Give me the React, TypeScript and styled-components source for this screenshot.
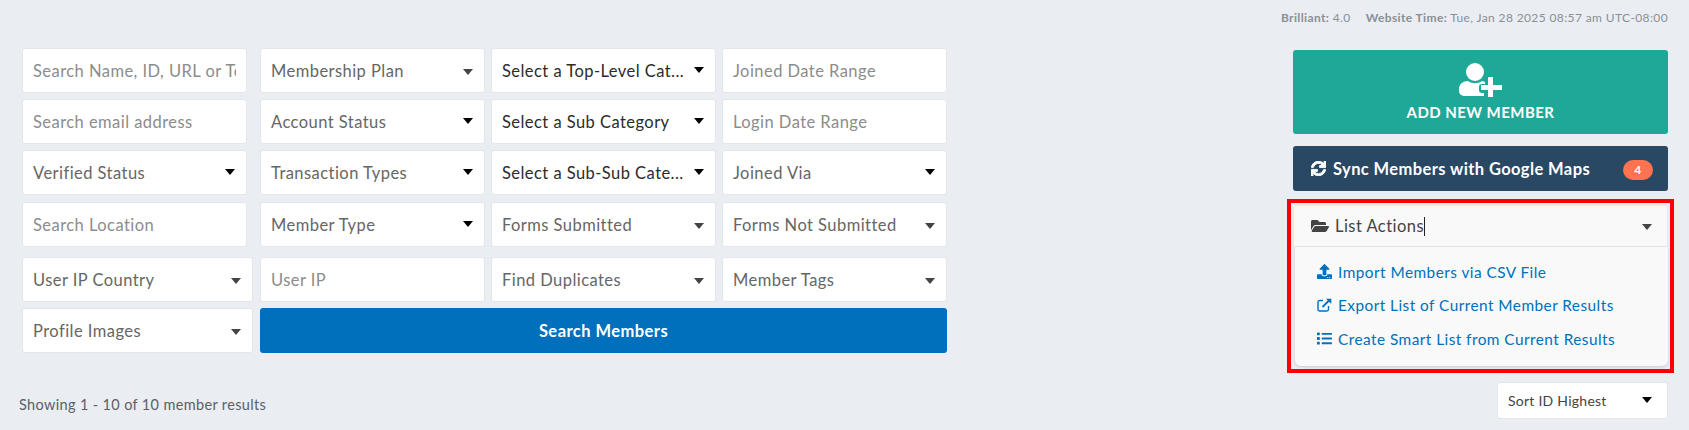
import React from 'react';
import styled, { createGlobalStyle } from 'styled-components';
import { FaSync, FaFolderOpen, FaUpload, FaList } from 'react-icons/fa';

const GlobalStyle = createGlobalStyle`
  html, body {
    margin: 0;
    padding: 0;
    background: #eaedf2;
    font-family: 'Lato', 'Open Sans', sans-serif;
    letter-spacing: 0.45px;
  }
  * { box-sizing: border-box; }
`;

const Caret = ({ solid }: { solid?: boolean }) => (
  <CaretMark $solid={solid} width="10" height="6" viewBox="0 0 10 6">
    <path d="M0 0h10L5 6z" fill="currentColor" />
  </CaretMark>
);

const Select = ({
  label,
  dark,
  solid,
  width
}: {
  label: string;
  dark?: boolean;
  solid?: boolean;
  width?: number;
}) => (
  <Field $width={width}>
    <SelectText $dark={dark}>{label}</SelectText>
    <Caret solid={solid} />
  </Field>
);

const App = () => (
  <Page>
    <GlobalStyle />
    <VersionBar>
      <b>Brilliant:</b> 4.0
      <TimeLabel>Website Time:</TimeLabel> Tue, Jan 28 2025 08:57 am UTC-08:00
    </VersionBar>
    <Main>
      <Filters>
        <FilterGrid>
          <Input $width={225} placeholder="Search Name, ID, URL or Token" />
          <Select label="Membership Plan" />
          <Select label="Select a Top-Level Cat..." dark solid />
          <Input placeholder="Joined Date Range" />

          <Input $width={225} placeholder="Search email address" />
          <Select label="Account Status" solid />
          <Select label="Select a Sub Category" dark solid />
          <Input placeholder="Login Date Range" />

          <Select label="Verified Status" solid width={225} />
          <Select label="Transaction Types" solid />
          <Select label="Select a Sub-Sub Cate..." dark solid />
          <Select label="Joined Via" solid />

          <Input $width={225} placeholder="Search Location" />
          <Select label="Member Type" solid />
          <Select label="Forms Submitted" />
          <Select label="Forms Not Submitted" />
        </FilterGrid>
        <FilterGridLower>
          <Select label="User IP Country" width={231} />
          <Input placeholder="User IP" />
          <Select label="Find Duplicates" />
          <Select label="Member Tags" />

          <Select label="Profile Images" width={231} />
          <SearchButton>Search Members</SearchButton>
        </FilterGridLower>
        <ResultCount>Showing 1 - 10 of 10 member results</ResultCount>
      </Filters>

      <Sidebar>
        <AddButton>
          <svg width="44" height="34" viewBox="0 0 44 34" fill="#fff">
            <circle cx="16" cy="9" r="9" />
            <path d="M9 18c4 3 10 3 14 0l3 1v2h-3a3 3 0 0 0-3 3v3a3 3 0 0 0 3 3h2v3H5a5 5 0 0 1-5-5v-2c0-5 4-8 9-8z" />
            <path d="M29 14h5v8h9v5h-9v7h-5v-7h-7v-5h7z" />
          </svg>
          ADD NEW MEMBER
        </AddButton>
        <SyncButton>
          <SyncLabel>
            <SyncIcon size={15} />
            Sync Members with Google Maps
          </SyncLabel>
          <Badge>4</Badge>
        </SyncButton>
        <Highlight>
          <ActionsHeader>
            <ActionsTitle>
              <FaFolderOpen size={18} />
              List Actions
              <TextCursor />
            </ActionsTitle>
            <Caret />
          </ActionsHeader>
          <ActionsMenu>
            <ActionLink>
              <FaUpload size={15} />
              Import Members via CSV File
            </ActionLink>
            <ActionLink>
              <svg width="15" height="14" viewBox="0 0 15 14" fill="none" stroke="currentColor" strokeWidth="1.4">
                <path d="M11.5 8v3.3a1.7 1.7 0 0 1-1.7 1.7H2.7A1.7 1.7 0 0 1 1 11.3V4.2a1.7 1.7 0 0 1 1.7-1.7H6" />
                <path d="M5.5 9 13 1.5" strokeWidth="1.8" />
                <path d="M9 .7h5.3V6z" fill="currentColor" stroke="none" />
              </svg>
              Export List of Current Member Results
            </ActionLink>
            <ActionLink>
              <FaList size={15} />
              Create Smart List from Current Results
            </ActionLink>
          </ActionsMenu>
        </Highlight>
        <SortBox>
          Sort ID Highest
          <Caret solid />
        </SortBox>
      </Sidebar>
    </Main>
  </Page>
);

const Page = styled.div`
  width: 1689px;
  height: 430px;
  overflow: hidden;
  background: #eaedf2;
  color: #555;
`;

const VersionBar = styled.div`
  height: 48px;
  padding: 10px 21px 0 0;
  text-align: right;
  font-size: 12px;
  line-height: 16px;
  color: #8b8f96;
  letter-spacing: 0.38px;
  b {
    font-weight: 700;
  }
`;

const TimeLabel = styled.b`
  margin-left: 15px;
`;

const Main = styled.div`
  display: flex;
  justify-content: space-between;
  padding: 0 21px 0 22px;
`;

const Filters = styled.div`
  display: flex;
  flex-direction: column;
  width: 925px;
`;

const FilterGrid = styled.div`
  display: grid;
  grid-template-columns: 232px 225px 225px 225px;
  grid-template-rows: 45px 45px 46px 45px;
  align-items: start;
  column-gap: 6px;
  row-gap: 6px;
`;

const FilterGridLower = styled(FilterGrid)`
  grid-template-rows: 45px 45px;
  margin-top: 10px;
`;

const fieldBase = `
  height: 45px;
  background: #fff;
  border: 1px solid #e3e6eb;
  border-radius: 3px;
  font-size: 16.5px;
`;

const Input = styled.input<{ $width?: number }>`
  ${fieldBase}
  width: ${(p) => (p.$width ? `${p.$width}px` : '100%')};
  padding: 0 10px;
  font-family: inherit;
  letter-spacing: inherit;
  outline: 0;
  &::placeholder {
    color: #8c8c8c;
    opacity: 1;
  }
`;

const Field = styled.div<{ $width?: number }>`
  ${fieldBase}
  width: ${(p) => (p.$width ? `${p.$width}px` : '100%')};
  display: flex;
  align-items: center;
  justify-content: space-between;
  padding: 0 11px 0 10px;
  white-space: nowrap;
`;

const SelectText = styled.span<{ $dark?: boolean }>`
  color: ${(p) => (p.$dark ? '#2b2b2b' : '#666')};
`;

const CaretMark = styled.svg<{ $solid?: boolean }>`
  flex: none;
  color: ${(p) => (p.$solid ? '#000' : '#444')};
  margin-top: ${(p) => (p.$solid ? '-2px' : '2px')};
`;

const SearchButton = styled.button`
  grid-column: 2 / 5;
  height: 45px;
  background: #0070bc;
  color: #fff;
  border: 0;
  border-radius: 3px;
  font-family: inherit;
  letter-spacing: inherit;
  font-size: 16.5px;
  font-weight: 700;
`;

const ResultCount = styled.div`
  margin: 42px 0 0 -3px;
  font-size: 14.5px;
  letter-spacing: 0.35px;
  line-height: 20px;
  color: #5c5f66;
`;

const Sidebar = styled.div`
  width: 375px;
  margin-top: 2px;
  display: flex;
  flex-direction: column;
  align-items: stretch;
`;

const AddButton = styled.div`
  height: 84px;
  background: #1fa898;
  border-radius: 3px;
  color: #fff;
  display: flex;
  flex-direction: column;
  align-items: center;
  justify-content: center;
  gap: 6px;
  font-size: 15px;
  font-weight: 700;
`;

const SyncButton = styled.div`
  height: 45px;
  margin-top: 12px;
  background: #284864;
  border-radius: 3px;
  color: #fff;
  display: flex;
  align-items: center;
  justify-content: space-between;
  padding: 0 15px 0 18px;
  font-size: 16.5px;
  font-weight: 700;
  letter-spacing: 0.4px;
`;

const SyncLabel = styled.span`
  display: flex;
  align-items: center;
  gap: 7px;
`;

const SyncIcon = styled(FaSync)`
  stroke: #fff;
  stroke-width: 30px;
`;

const Badge = styled.span`
  width: 30px;
  height: 20px;
  margin-top: 3px;
  border-radius: 10px;
  background: #ff7350;
  font-size: 12px;
  line-height: 20px;
  text-align: center;
`;

const Highlight = styled.div`
  margin: 8px -6px 0;
  height: 174px;
  border: 4px solid #f00;
  padding: 2px 2px 0;
  display: flex;
  flex-direction: column;
`;

const ActionsHeader = styled.div`
  height: 42px;
  background: #f9f9f9;
  border: 1px solid #e6e8ec;
  border-radius: 3px 3px 0 0;
  display: flex;
  align-items: center;
  justify-content: space-between;
  padding: 0 15px 0 17px;
  font-size: 16.5px;
  color: #444;
`;

const ActionsTitle = styled.span`
  display: flex;
  align-items: center;
  gap: 6px;
  svg {
    color: #444;
  }
`;

const TextCursor = styled.span`
  width: 1px;
  height: 19px;
  margin-left: -6px;
  background: #222;
`;

const ActionsMenu = styled.div`
  margin: 0 0 0 2px;
  height: 119px;
  background: #f9f9f9;
  border-radius: 0 0 6px 6px;
  box-shadow: 0 1px 3px rgba(0, 0, 0, 0.15);
  display: flex;
  flex-direction: column;
  padding: 8px 0 0 22px;
`;

const ActionLink = styled.div`
  height: 33.5px;
  display: flex;
  align-items: center;
  gap: 6px;
  font-size: 15.4px;
  color: #0070bc;
`;

const SortBox = styled.div`
  width: 171px;
  height: 37px;
  margin: 9px 0 0 auto;
  background: #fff;
  border: 1px solid #e3e6eb;
  border-radius: 3px;
  display: flex;
  align-items: center;
  justify-content: space-between;
  padding: 0 15px 0 10px;
  font-size: 14px;
  letter-spacing: 0.25px;
  color: #444;
`;

export default App;
